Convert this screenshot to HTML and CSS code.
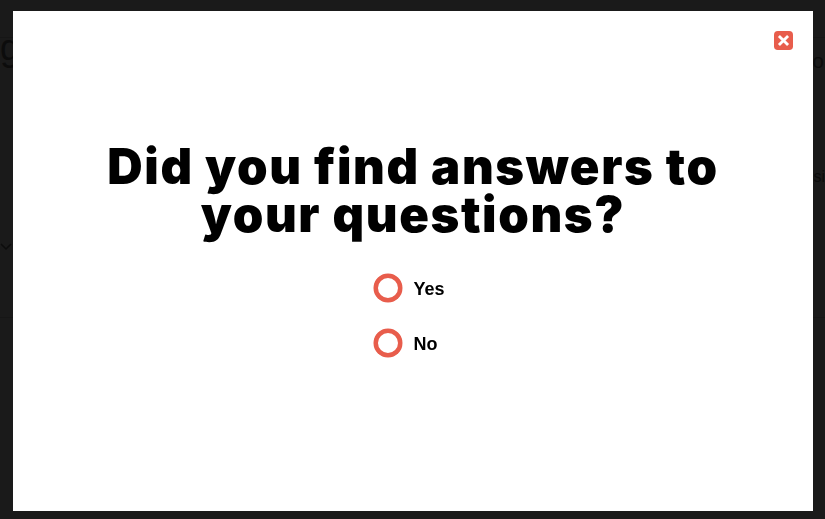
FILE: index.html
```html
<!DOCTYPE html>
<html lang="en">
<head>
    <meta charset="UTF-8">
    <meta name="viewport" content="width=device-width, initial-scale=1.0">
    <title>Survey</title>
    <link rel="stylesheet" href="styles.css">
</head>
<body>
    <!-- Page behind the overlay -->
    <div class="page">
        <div class="page-header">
            <span class="page-logo">g</span>
            <span class="page-contact">Co</span>
        </div>
        <div class="page-nav">
            <span class="page-link">Decisi</span>
        </div>
        <svg class="page-chevron" width="12" height="8" viewBox="0 0 12 8">
            <path d="M1 1l5 5 5-5" fill="none" stroke="#0c0c0c" stroke-width="1.5"/>
        </svg>
        <div class="page-rule"></div>
    </div>

    <div class="overlay">
        <div class="modal">
            <button class="btn-close" aria-label="Close">
                <svg width="20" height="20" viewBox="0 0 20 20">
                    <rect width="20" height="20" rx="4" fill="#e85d4c"/>
                    <path d="M5.2 5.2l9.6 9.6M14.8 5.2l-9.6 9.6" stroke="#fff" stroke-width="3"/>
                </svg>
            </button>
            <h1>Did you find answers to your questions?</h1>
            <div class="options">
                <label class="option"><span class="radio"></span><span class="option-text">Yes</span></label>
                <label class="option"><span class="radio"></span><span class="option-text">No</span></label>
            </div>
        </div>
    </div>
</body>
</html>
```

FILE: styles.css
```css
html, body {
    height: 100%;
}

body {
    margin: 0;
    background-color: #1a1a1a;
    font-family: "Liberation Sans", Arial, sans-serif;
    overflow: hidden;
}

.page {
    color: #0c0c0c;
}

.page-header {
    display: flex;
    justify-content: space-between;
    align-items: flex-start;
    height: 37px;
    padding-right: 1px;
    border-bottom: 1px solid #161616;
}

.page-logo {
    font-size: 36px;
    line-height: 36px;
    margin-top: 30px;
}

.page-contact {
    font-size: 21px;
    margin-top: 49px;
}

.page-link {
    font-size: 16px;
    margin-top: 52px;
}

.page-nav {
    display: flex;
    justify-content: flex-end;
    padding-top: 78px;
}

.page-chevron {
    display: block;
    margin-top: 57px;
}

.page-rule {
    margin-top: 66px;
    border-top: 1px solid #161616;
}

.overlay {
    position: fixed;
    top: 0;
    left: 0;
    right: 0;
    bottom: 0;
    display: flex;
    justify-content: center;
    align-items: center;
}

.modal {
    position: relative;
    width: 800px;
    height: 500px;
    margin: 3px 0 0 1px;
    background: #fff;
    padding-top: 132px;
    box-sizing: border-box;
}

.btn-close {
    position: absolute;
    top: 20px;
    right: 20px;
    width: 19px;
    height: 19px;
    padding: 0;
    border: none;
    background: none;
    cursor: pointer;
}

.btn-close svg {
    display: block;
    width: 19px;
    height: 19px;
}

.modal h1 {
    width: 660px;
    margin: 0 auto;
    color: #000;
    font-family: Inter, "Liberation Sans", sans-serif;
    font-size: 49px;
    font-weight: 900;
    line-height: 48px;
    letter-spacing: 1.6px;
    text-align: center;
    will-change: transform;
}

.options {
    display: flex;
    flex-direction: column;
    gap: 27px;
    width: 78px;
    margin: 35px auto 0;
    will-change: transform;
}

.option {
    display: flex;
    align-items: center;
    gap: 11.5px;
    height: 28px;
    color: #000;
    font-size: 18px;
    font-weight: 700;
    cursor: pointer;
}

.option-text {
    padding-top: 2px;
}

.radio {
    width: 28px;
    height: 28px;
    box-sizing: border-box;
    border: 4.5px solid #e85d4c;
    border-radius: 50%;
    background: #fff;
    box-shadow: 0 0 0 0.5px #e85d4c;
}
```
